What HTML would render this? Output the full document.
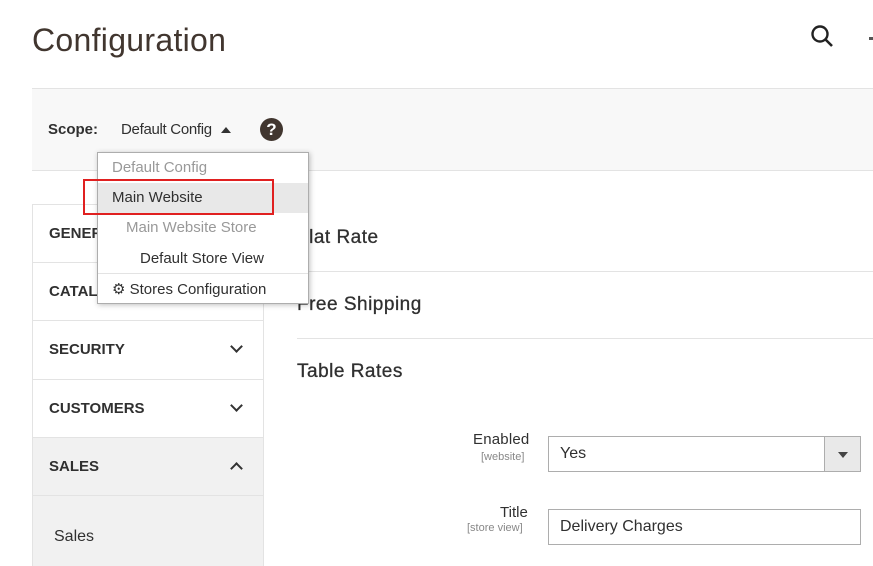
<!DOCTYPE html>
<html><head><style>
*{margin:0;padding:0;box-sizing:border-box}
body{width:873px;height:566px;overflow:hidden;background:#fff;font-family:"Liberation Sans",sans-serif;color:#303030;position:relative}
.a{position:absolute;white-space:nowrap}
.nav{position:absolute;left:32px;width:232px;border:1px solid #e3e3e3;border-bottom:none}
.nv{position:absolute;left:49px;font-weight:bold;font-size:15px;color:#303030}
.chev{position:absolute;left:232px;width:9px;height:9px;border-right:2px solid #333;border-bottom:2px solid #333;transform:rotate(45deg)}
.hr{position:absolute;left:297px;right:0;height:1px;background:#e3e3e3}
.sec{position:absolute;left:297px;font-size:19px;color:#303030;letter-spacing:.5px;-webkit-text-stroke:.3px #303030}
</style></head><body>
<div class="a" style="left:32px;top:22px;font-size:32px;color:#41362f;letter-spacing:.3px">Configuration</div>
<svg class="a" style="left:810px;top:24px" width="26" height="26" viewBox="0 0 26 26"><circle cx="10" cy="10" r="7.5" fill="none" stroke="#222" stroke-width="2.4"/><path d="M15.5 15.5L22 22" stroke="#222" stroke-width="2.6"/></svg>
<div class="a" style="left:869px;top:37px;width:4px;height:3px;background:#555"></div>
<div class="a" style="left:32px;top:88px;width:841px;height:83px;background:#f8f8f8;border-top:1px solid #e3e3e3;border-bottom:1px solid #e3e3e3"></div>
<div class="a" style="left:48px;top:121px;font-size:15px;font-weight:bold;color:#303030">Scope:</div>
<div class="a" style="left:121px;top:121px;font-size:15px;color:#303030;letter-spacing:-.3px">Default Config</div>
<div class="a" style="left:221px;top:127px;width:0;height:0;border-left:5px solid transparent;border-right:5px solid transparent;border-bottom:6px solid #333"></div>
<div class="a" style="left:260px;top:118px;width:23px;height:23px;border-radius:50%;background:#41362f;color:#fff;font-weight:bold;font-size:17px;text-align:center;line-height:23px">?</div>

<div class="nav" style="top:204px;height:362px"></div>
<div class="a" style="left:33px;top:437px;width:230px;height:129px;background:#f1f1f1"></div>
<div class="a" style="left:32px;top:262px;width:232px;height:1px;background:#e3e3e3"></div>
<div class="a" style="left:32px;top:320px;width:232px;height:1px;background:#e3e3e3"></div>
<div class="a" style="left:32px;top:379px;width:232px;height:1px;background:#e3e3e3"></div>
<div class="a" style="left:32px;top:437px;width:232px;height:1px;background:#e3e3e3"></div>
<div class="a" style="left:32px;top:495px;width:232px;height:1px;background:#e3e3e3"></div>
<div class="nv" style="top:225px">GENERAL</div>
<div class="nv" style="top:283px">CATALOG</div>
<div class="nv" style="top:341px">SECURITY</div>
<div class="chev" style="top:342px"></div>
<div class="nv" style="top:400px">CUSTOMERS</div>
<div class="chev" style="top:401px"></div>
<div class="nv" style="top:458px">SALES</div>
<div class="chev" style="top:464px;transform:rotate(-135deg)"></div>
<div class="a" style="left:54px;top:528px;font-size:16px;color:#303030">Sales</div>

<div class="sec" style="top:227px">Flat Rate</div>
<div class="hr" style="top:271px"></div>
<div class="sec" style="top:294px">Free Shipping</div>
<div class="hr" style="top:338px"></div>
<div class="sec" style="top:361px">Table Rates</div>

<div class="a" style="left:473px;top:431px;font-size:15px;color:#303030;letter-spacing:.2px">Enabled</div>
<div class="a" style="left:481px;top:451px;font-size:11px;color:#888">[website]</div>
<div class="a" style="left:548px;top:436px;width:313px;height:36px;border:1px solid #adadad;background:#fff"></div>
<div class="a" style="left:824px;top:437px;width:36px;height:34px;background:#e9e9e9;border-left:1px solid #adadad"></div>
<div class="a" style="left:838px;top:452px;width:0;height:0;border-left:5px solid transparent;border-right:5px solid transparent;border-top:6px solid #444"></div>
<div class="a" style="left:560px;top:445px;font-size:16px;color:#303030">Yes</div>
<div class="a" style="left:500px;top:504px;font-size:15px;color:#303030">Title</div>
<div class="a" style="left:467px;top:522px;font-size:11px;color:#888">[store view]</div>
<div class="a" style="left:548px;top:509px;width:313px;height:36px;border:1px solid #adadad;background:#fff"></div>
<div class="a" style="left:560px;top:518px;font-size:16px;color:#303030">Delivery Charges</div>

<div class="a" style="left:97px;top:152px;width:212px;height:152px;background:#fff;border:1px solid #adadad;box-shadow:1px 1px 5px rgba(0,0,0,.25)"></div>
<div class="a" style="left:98px;top:183px;width:210px;height:30px;background:#e8e8e8"></div>
<div class="a" style="left:98px;top:273px;width:210px;height:1px;background:#e3e3e3"></div>
<div class="a" style="left:112px;top:159px;font-size:15px;color:#999">Default Config</div>
<div class="a" style="left:112px;top:189px;font-size:15px;color:#303030">Main Website</div>
<div class="a" style="left:126px;top:219px;font-size:15px;color:#999">Main Website Store</div>
<div class="a" style="left:140px;top:250px;font-size:15px;color:#303030">Default Store View</div>
<div class="a" style="left:112px;top:280px;font-size:15px;color:#303030">&#9881; Stores Configuration</div>
<div class="a" style="left:83px;top:179px;width:191px;height:36px;border:2px solid #e02020"></div>
</body></html>
